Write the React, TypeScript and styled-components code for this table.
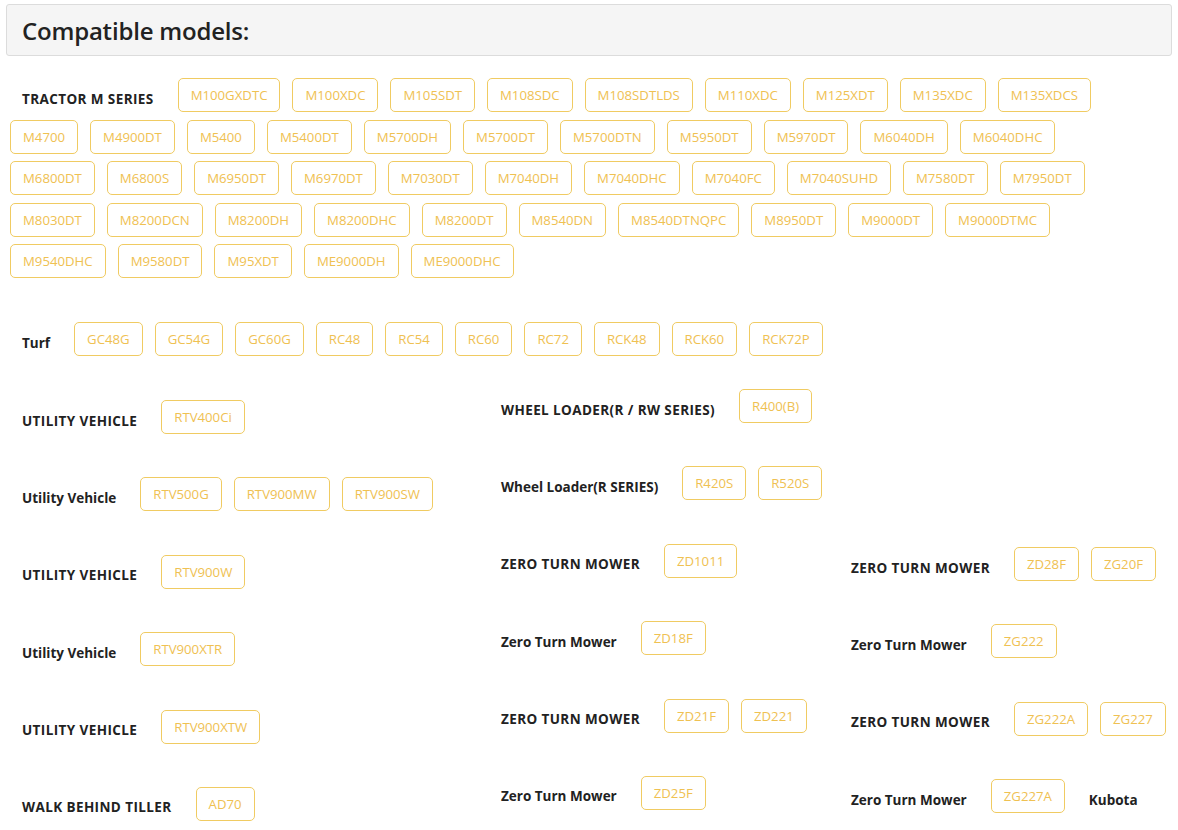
import React from "react";
import styled, { createGlobalStyle } from "styled-components";

const Global = createGlobalStyle`
  html, body { margin: 0; padding: 0; background: #fff; }
  body { font-family: "Open Sans", "Noto Sans", sans-serif; color: #222; }
`;

const Page = styled.div`
  width: 1178px;
  padding: 4px 6px 0 6px;
  box-sizing: border-box;
`;

const Header = styled.div`
  height: 52px;
  box-sizing: border-box;
  border: 1px solid #dcdcdc;
  border-radius: 3px;
  background: #f5f5f5;
  display: flex;
  align-items: center;
  padding: 0 15px;
`;

const Title = styled.h2`
  margin: 0;
  font-family: "Open Sans", sans-serif;
  font-size: 24px;
  font-weight: 600;
  color: #222;
  letter-spacing: -0.2px;
`;

const Body = styled.div`
  padding: 22px 0 0 4px;
`;

const Group = styled.div`
  display: flex;
  flex-direction: column;
  gap: 7.5px;
`;

const Row = styled.div`
  display: flex;
  align-items: center;
  height: 34px;
`;

const Label = styled.span<{ $mixed?: boolean }>`
  font-family: "Open Sans", sans-serif;
  font-weight: 700;
  font-size: 13.5px;
  letter-spacing: ${(p) => (p.$mixed ? "0px" : "0.4px")};
  color: #222;
  margin: 0 24px 0 12px;
  padding-top: 7px;
  white-space: nowrap;
`;

const Chip = styled.span`
  box-sizing: border-box;
  height: 34px;
  display: inline-flex;
  align-items: center;
  padding: 0 12px;
  margin-right: 12px;
  border: 1px solid #f0cb62;
  border-radius: 5px;
  color: #efc152;
  font-family: "Open Sans", sans-serif;
  font-size: 13.2px;
  white-space: nowrap;
`;

const Turf = styled.div`
  margin-top: 44px;
`;

const Columns = styled.div`
  display: flex;
  align-items: flex-start;
`;

const Column = styled.div<{ $w: number; $top: number }>`
  width: ${(p) => p.$w}px;
  padding-top: ${(p) => p.$top}px;
  display: flex;
  flex-direction: column;
  gap: 43.4px;
  flex-shrink: 0;
`;

type Block = { label: string; chips: string[]; tail?: string };

const tractorRows: string[][] = [
  ["M100GXDTC", "M100XDC", "M105SDT", "M108SDC", "M108SDTLDS", "M110XDC", "M125XDT", "M135XDC", "M135XDCS"],
  ["M4700", "M4900DT", "M5400", "M5400DT", "M5700DH", "M5700DT", "M5700DTN", "M5950DT", "M5970DT", "M6040DH", "M6040DHC"],
  ["M6800DT", "M6800S", "M6950DT", "M6970DT", "M7030DT", "M7040DH", "M7040DHC", "M7040FC", "M7040SUHD", "M7580DT", "M7950DT"],
  ["M8030DT", "M8200DCN", "M8200DH", "M8200DHC", "M8200DT", "M8540DN", "M8540DTNQPC", "M8950DT", "M9000DT", "M9000DTMC"],
  ["M9540DHC", "M9580DT", "M95XDT", "ME9000DH", "ME9000DHC"],
];

const turf = ["GC48G", "GC54G", "GC60G", "RC48", "RC54", "RC60", "RC72", "RCK48", "RCK60", "RCK72P"];

const col1: Block[] = [
  { label: "UTILITY VEHICLE", chips: ["RTV400Ci"] },
  { label: "Utility Vehicle", chips: ["RTV500G", "RTV900MW", "RTV900SW"] },
  { label: "UTILITY VEHICLE", chips: ["RTV900W"] },
  { label: "Utility Vehicle", chips: ["RTV900XTR"] },
  { label: "UTILITY VEHICLE", chips: ["RTV900XTW"] },
  { label: "WALK BEHIND TILLER", chips: ["AD70"] },
];

const col2: Block[] = [
  { label: "WHEEL LOADER(R / RW SERIES)", chips: ["R400(B)"] },
  { label: "Wheel Loader(R SERIES)", chips: ["R420S", "R520S"] },
  { label: "ZERO TURN MOWER", chips: ["ZD1011"] },
  { label: "Zero Turn Mower", chips: ["ZD18F"] },
  { label: "ZERO TURN MOWER", chips: ["ZD21F", "ZD221"] },
  { label: "Zero Turn Mower", chips: ["ZD25F"] },
];

const col3: Block[] = [
  { label: "ZERO TURN MOWER", chips: ["ZD28F", "ZG20F"] },
  { label: "Zero Turn Mower", chips: ["ZG222"] },
  { label: "ZERO TURN MOWER", chips: ["ZG222A", "ZG227"] },
  { label: "Zero Turn Mower", chips: ["ZG227A"], tail: "Kubota" },
];

const isMixed = (s: string) => s !== s.toUpperCase();

const BlockRow = ({ b }: { b: Block }) => (
  <Row>
    <Label $mixed={isMixed(b.label)}>{b.label}</Label>
    {b.chips.map((c) => (
      <Chip key={c}>{c}</Chip>
    ))}
    {b.tail && <Label $mixed>{b.tail}</Label>}
  </Row>
);

export default function App() {
  return (
    <>
      <Global />
      <Page>
        <Header>
          <Title>Compatible models:</Title>
        </Header>
        <Body>
          <Group>
            {tractorRows.map((r, i) => (
              <Row key={i}>
                {i === 0 && <Label>TRACTOR M SERIES</Label>}
                {r.map((c) => (
                  <Chip key={c}>{c}</Chip>
                ))}
              </Row>
            ))}
          </Group>
          <Turf>
            <BlockRow b={{ label: "Turf", chips: turf }} />
          </Turf>
          <Columns>
            <Column $w={479} $top={44}>
              {col1.map((b, i) => (
                <BlockRow key={i} b={b} />
              ))}
            </Column>
            <Column $w={350} $top={33}>
              {col2.map((b, i) => (
                <BlockRow key={i} b={b} />
              ))}
            </Column>
            <Column $w={330} $top={191}>
              {col3.map((b, i) => (
                <BlockRow key={i} b={b} />
              ))}
            </Column>
          </Columns>
        </Body>
      </Page>
    </>
  );
}
